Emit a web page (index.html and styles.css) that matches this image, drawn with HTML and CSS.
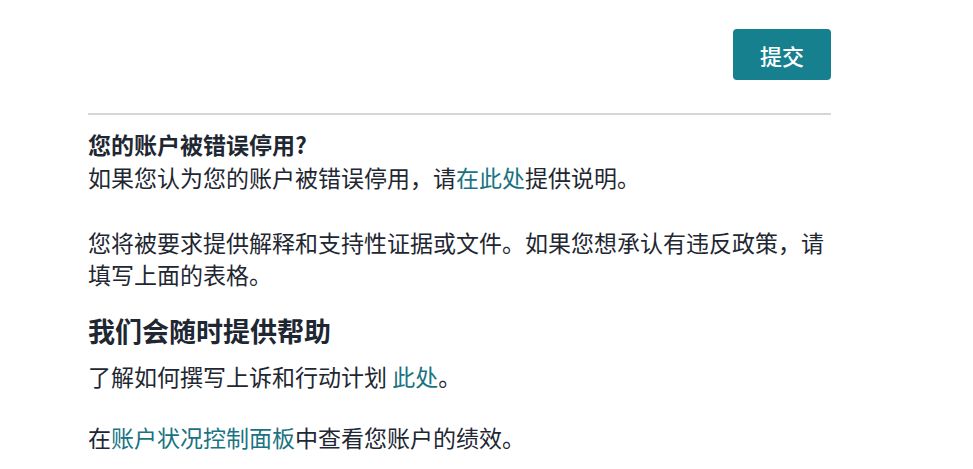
FILE: index.html
```html
<!DOCTYPE html>
<html lang="zh-CN">
  <head>
    <meta charset="utf-8">
    <meta name="viewport" content="width=device-width, initial-scale=1">
    <link rel="stylesheet" href="styles.css">
  </head>
  <body>
    <div class="page">
      <div class="actions">
        <button class="submit" type="button">提交</button>
      </div>
      <hr class="divider">
      <p class="question">您的账户被错误停用?</p>
      <p>如果您认为您的账户被错误停用，请<a href="#">在此处</a>提供说明。</p>
      <p>您将被要求提供解释和支持性证据或文件。如果您想承认有违反政策，请填写上面的表格。</p>
      <h2 class="help-title">我们会随时提供帮助</h2>
      <p class="help-text">了解如何撰写上诉和行动计划 <a href="#">此处</a>。</p>
      <p class="help-text">在<a href="#">账户状况控制面板</a>中查看您账户的绩效。</p>
    </div>
  </body>
</html>
```

FILE: styles.css
```css
body {
  margin: 0;
  font-family: "Noto Sans CJK SC", "Noto Sans", sans-serif;
  color: #1e2732;
  background: #fff;
}
.page {
  width: 743px;
  margin-left: 88px;
  padding-top: 29px;
}
.actions {
  display: flex;
  justify-content: flex-end;
}
.submit {
  width: 98px;
  height: 51px;
  border: 0;
  border-radius: 4px;
  background: #17808f;
  color: #fff;
  font-family: inherit;
  font-size: 22px;
  font-weight: 500;
  cursor: pointer;
}
.divider {
  margin: 33px 0 13px;
  border: 0;
  border-top: 2px solid #d5d6d6;
}
p {
  margin: 0 0 33px;
  font-size: 23px;
  line-height: 32px;
}
p.question {
  margin-bottom: 1px;
  font-weight: 700;
}
p.help-text {
  margin-bottom: 29px;
}
a {
  color: #1a7382;
  text-decoration: none;
}
.help-title {
  margin: -9px 0 12px;
  font-size: 27px;
  line-height: 34px;
  font-weight: 700;
}
```
